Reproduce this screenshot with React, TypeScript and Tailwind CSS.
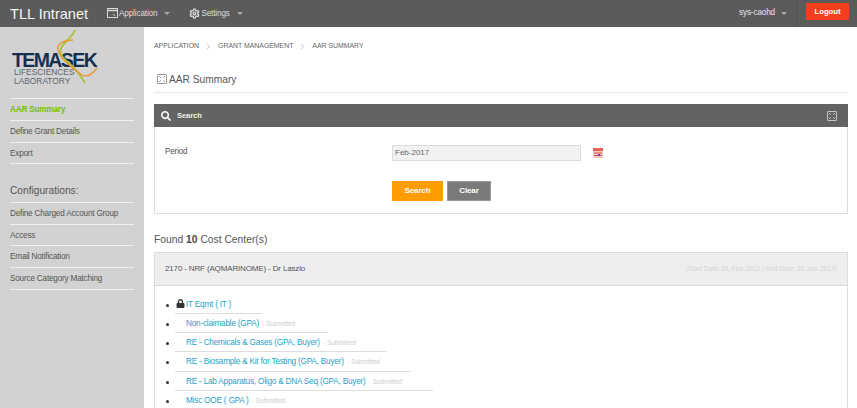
import { ChevronRight, Settings } from "lucide-react";
import { FaSearch, FaLock } from "react-icons/fa";

const font = { fontFamily: '"Liberation Sans", Arial, sans-serif' };

function Caret({ className }: { className?: string }) {
  return <span className={`inline-block h-0 w-0 border-x-[3.5px] border-t-[3px] border-x-transparent border-t-[#a8a8a8] ${className}`} />;
}

function ExpandIcon({ className }: { className?: string }) {
  return (
    <svg viewBox="0 0 12 12" className={className} fill="none" stroke="currentColor" strokeWidth="1">
      <rect x="0.5" y="0.5" width="11" height="11" rx="1" />
      <path d="M2.5 2.5l2 2M9.5 2.5l-2 2M2.5 9.5l2-2M9.5 9.5l-2-2" />
    </svg>
  );
}

function WindowIcon() {
  return (
    <svg viewBox="0 0 11 10" className="h-[10px] w-[11px] text-[#d8d8d8]" fill="none" stroke="currentColor">
      <rect x="0.5" y="0.5" width="10" height="9" />
      <path d="M0.5 2.5h10" strokeWidth="1.5" />
      <path d="M6 6l2 2" />
    </svg>
  );
}

function Logo() {
  return (
    <div className="relative h-[62px] w-[100px]">
      <div className="absolute left-[2px] top-[22px] text-[19.5px] leading-[16px] font-bold tracking-[-1.6px] text-[#14304f]">TEMASEK</div>
      <div className="absolute left-[4px] top-[38px] text-[8.4px] leading-[9px] text-[#5c6670]">
        LIFESCIENCES
        <br />
        LABORATORY
      </div>
      <svg viewBox="0 0 100 62" className="absolute inset-0 h-full w-full" fill="none">
        <path d="M65 0C62 8 54 12 51 18C48 26 56 30 64 38C70 44 72 48 75 53" stroke="#a9c23f" strokeWidth="2" />
        <path d="M63 10C54 10 46 14 48 20C50 28 62 38 72 45C78 48 84 42 87 38" stroke="#f0962a" strokeWidth="1.3" />
      </svg>
    </div>
  );
}

function SideLink({ label, active }: { label: string; active?: boolean }) {
  return (
    <a className={`block h-[21.8px] border-b border-[#f0f0f0] pt-[4px] text-[8.2px] leading-[13px] tracking-[-0.2px] ${active ? "font-bold text-[#76c000]" : "text-[#555]"}`}>
      {label}
    </a>
  );
}

const items = [
  { name: "Non-claimable (GPA)", w: "w-[153px]" },
  { name: "RE - Chemicals & Gases (GPA, Buyer)", w: "w-[212px]" },
  { name: "RE - Biosample & Kit for Testing (GPA, Buyer)", w: "w-[236px]" },
  { name: "RE - Lab Apparatus, Oligo & DNA Seq (GPA, Buyer)", w: "w-[258px]" },
  { name: "Misc OOE ( GPA )", w: "w-[120px]" },
];

export default function App() {
  return (
    <div className="flex h-[408px] w-[857px] flex-col overflow-hidden bg-white" style={font}>
      <header className="flex h-[27px] shrink-0 items-center bg-[#5b5b5b] text-white">
        <div className="ml-[10px] w-[97px] text-[14.6px] leading-[24px] text-[#f5f5f5]">TLL Intranet</div>
        <div className="flex items-center gap-[1px] text-[8.2px] tracking-[-0.15px] text-[#dddddd]">
          <WindowIcon />
          <span className="pt-[1px]">Application</span>
          <Caret className="ml-[6px]" />
        </div>
        <div className="ml-[19px] flex items-center gap-[1px] text-[8.2px] tracking-[-0.15px] text-[#dddddd]">
          <Settings size={11} strokeWidth={3} className="text-[#d8d8d8]" />
          <span className="pt-[1px]">Settings</span>
          <Caret className="ml-[6px]" />
        </div>
        <div className="ml-auto flex h-full items-center">
          <span className="text-[8.2px] tracking-[-0.15px] text-[#e6e6e6]">sys-caohd</span>
          <Caret className="ml-[6px]" />
          <div className="ml-[9px] flex h-full items-center border-l border-[#505050] pl-[9px] pr-[8px]">
            <button className="mb-[4px] h-[17px] w-[43px] bg-[#f43f1f] text-[7.8px] font-bold tracking-[-0.1px] text-white">Logout</button>
          </div>
        </div>
      </header>
      <div className="flex min-h-0 flex-1">
        <aside className="w-[144px] shrink-0 bg-[#d2d2d2] px-[10px]">
          <div className="mt-[3px] h-[68px]">
            <Logo />
          </div>
          <div className="border-t border-[#f0f0f0]">
            <SideLink label="AAR Summary" active />
            <SideLink label="Define Grant Details" />
            <SideLink label="Export" />
          </div>
          <div className="mt-[19.5px] border-b border-[#f0f0f0] pb-[5px] text-[10.2px] leading-[13px] text-[#555]">Configurations:</div>
          <SideLink label="Define Charged Account Group" />
          <SideLink label="Access" />
          <SideLink label="Email Notification" />
          <SideLink label="Source Category Matching" />
        </aside>
        <main className="min-w-0 flex-1 pl-[10px] pr-[9px]">
          <nav className="mt-[14px] flex h-[10px] items-center text-[6.9px] uppercase text-[#666]">
            <span>Application</span>
            <ChevronRight size={9} className="mx-[5px] text-[#aaa]" />
            <span>Grant Management</span>
            <ChevronRight size={9} className="mx-[5px] text-[#aaa]" />
            <span>AAR Summary</span>
          </nav>
          <div className="mt-[22px] flex h-[20px] items-start border-b border-[#e6e6e6] pl-[3px]">
            <ExpandIcon className="mr-[2px] mt-[1px] h-[10px] w-[10px] text-[#777]" />
            <h1 className="text-[10.2px] leading-[13px] text-[#555]">AAR Summary</h1>
          </div>
          <section className="mt-[11px] border border-[#dcdcdc]">
            <div className="-m-px flex h-[23px] items-center bg-[#636363] pl-[7px] pr-[11px] text-white">
              <FaSearch size={10} />
              <span className="ml-[6px] pt-[1px] text-[7.6px] font-bold tracking-[-0.1px] text-[#eeeeee]">Search</span>
              <ExpandIcon className="ml-auto h-[10px] w-[10px] text-[#e4e4e4]" />
            </div>
            <div className="h-[87px] pl-[10px]">
              <div className="flex pt-[19px]">
                <label className="w-[227px] pt-[2px] text-[8.2px] leading-[10px] tracking-[-0.2px] text-[#555]">Period</label>
                <div className="h-[16px] w-[189px] border border-[#dcdcdc] bg-[#f2f2f2] pl-[2px] text-[8px] leading-[13px] text-[#666]">Feb-2017</div>
                <svg viewBox="0 0 10 10" className="ml-[12px] mt-[3px] h-[10px] w-[10px]">
                  <rect width="10" height="10" fill="#f7c9c4" />
                  <rect width="10" height="3" fill="#e8605a" />
                  <path d="M1 5h8M1 7.5h8" stroke="#d94f4a" />
                  <rect x="5" y="6" width="2" height="2" fill="#3b55b8" />
                </svg>
              </div>
              <div className="mt-[20px] flex gap-[4px] pl-[227px]">
                <button className="h-[20px] w-[51px] bg-[#ff9c00] text-[8px] font-bold tracking-[-0.15px] text-white">Search</button>
                <button className="h-[20px] w-[44px] border border-[#999] bg-[#7a7a7a] text-[8px] font-bold tracking-[-0.15px] text-white">Clear</button>
              </div>
            </div>
          </section>
          <h2 className="mt-[19px] text-[10.3px] leading-[14px] text-[#555]">
            Found <b className="text-[#444]">10</b> Cost Center(s)
          </h2>
          <section className="mt-[5px] border border-[#dcdcdc]">
            <div className="flex h-[33px] items-center justify-between border-b border-[#d8d8d8] bg-[#eeeeee] pl-[10px] pr-[10px]">
              <span className="text-[8px] tracking-[-0.15px] text-[#555]">2170 - NRF (AQMARINOME) - Dr Laszlo</span>
              <span className="text-[6.7px] text-[#d4d4d4]">(Start Date: 01-Feb-2012 | End Date: 31-Jan-2017)</span>
            </div>
            <ul className="pl-[11px] pt-[9px] text-[8.2px] leading-[12px] tracking-[-0.2px]">
              <li className="flex h-[19px]">
                <span className="mr-[6px] mt-[9px] h-[3px] w-[3px] shrink-0 rounded-full bg-[#333]" />
                <div className="h-[19px] w-[87px] border-b border-[#dddddd] pt-[4px]">
                  <FaLock size={9} className="ml-[1px] mr-[1px] inline-block align-[-1px] text-[#333]" />
                  <a className="text-[#1f9fc9]">IT Eqmt ( IT )</a>
                </div>
              </li>
              {items.map((it) => (
                <li key={it.name} className="flex h-[19.2px]">
                  <span className="mr-[6px] mt-[9px] h-[3px] w-[3px] shrink-0 rounded-full bg-[#333]" />
                  <div className={`h-[19.2px] ${it.w} border-b border-[#dddddd] pl-[11px] pt-[4px] whitespace-nowrap`}>
                    <a className="text-[#1f9fc9]">{it.name}</a>
                    <span className="ml-[3px] text-[6.5px] italic tracking-normal text-[#cccccc]">- Submitted</span>
                  </div>
                </li>
              ))}
            </ul>
          </section>
        </main>
      </div>
    </div>
  );
}
